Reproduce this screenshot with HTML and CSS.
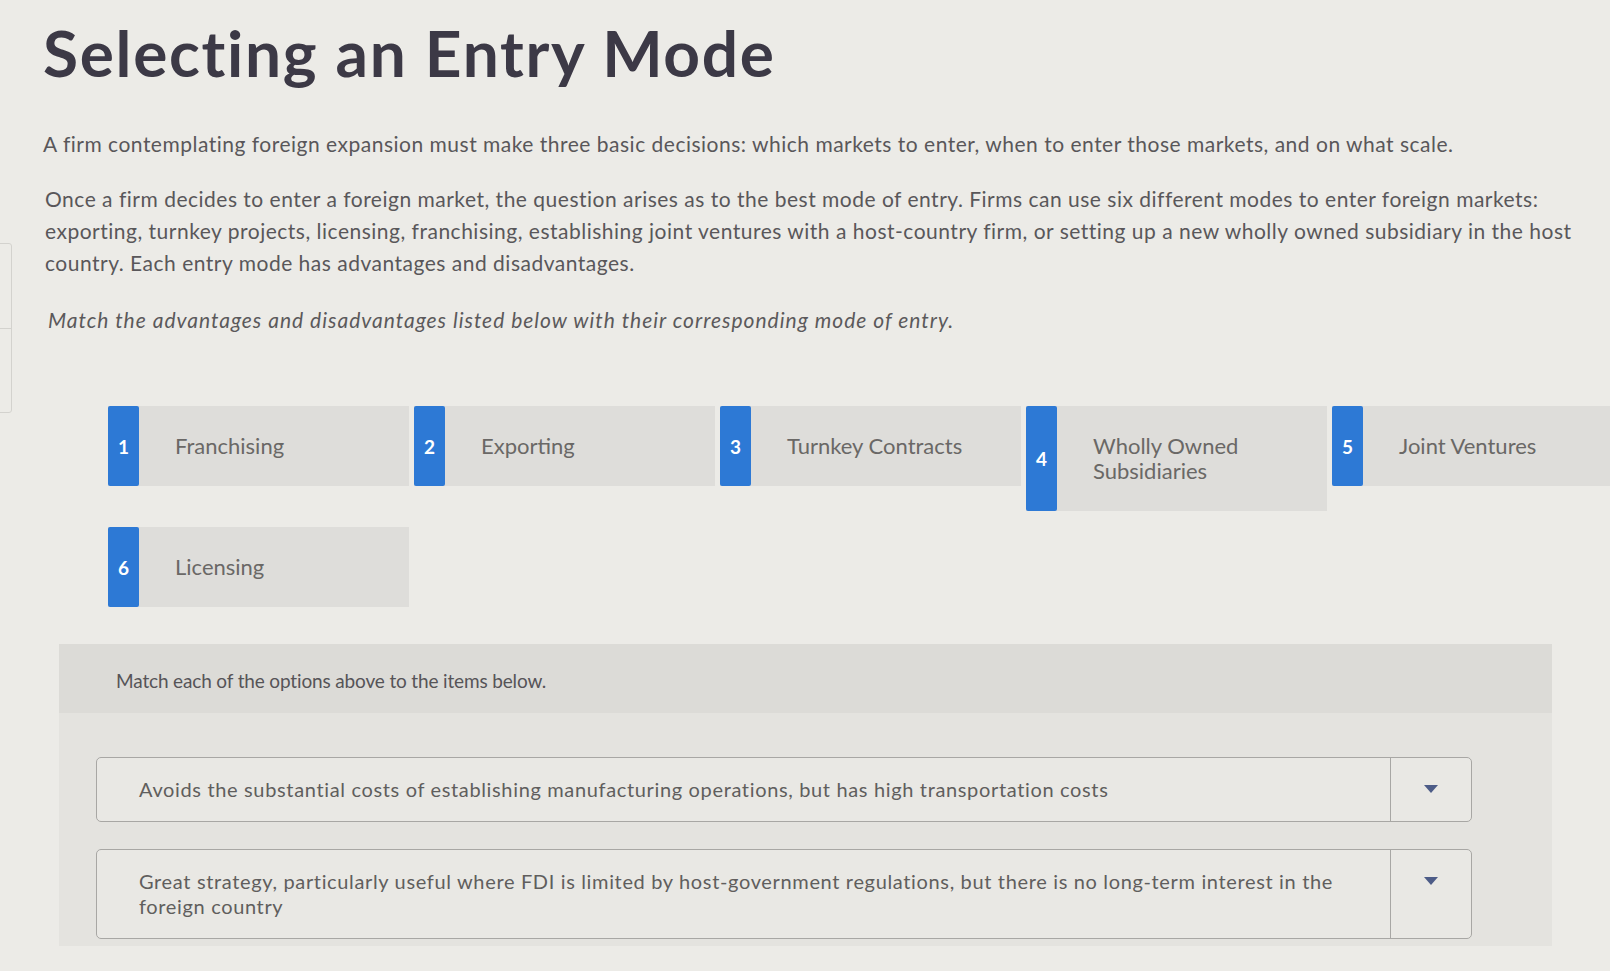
FILE: index.html
```html
<!DOCTYPE html>
<html lang="en">
<head>
<meta charset="utf-8">
<title>Selecting an Entry Mode</title>
<link rel="stylesheet" href="styles.css">
</head>
<body>
<div class="side-edge"><div class="side-edge-cell"></div><div class="side-edge-cell"></div></div>
<main class="page">
  <h1 class="title">Selecting an Entry Mode</h1>
  <p class="intro intro-first">A firm contemplating foreign expansion must make three basic decisions: which markets to enter, when to enter those markets, and on what scale.</p>
  <p class="intro intro-second">Once a firm decides to enter a foreign market, the question arises as to the best mode of entry. Firms can use six different modes to enter foreign markets: exporting, turnkey projects, licensing, franchising, establishing joint ventures with a host-country firm, or setting up a new wholly owned subsidiary in the host country. Each entry mode has advantages and disadvantages.</p>
  <p class="instruction">Match the advantages and disadvantages listed below with their corresponding mode of entry.</p>

  <div class="cards">
    <div class="card"><div class="card-num">1</div><div class="card-label">Franchising</div></div>
    <div class="card"><div class="card-num">2</div><div class="card-label">Exporting</div></div>
    <div class="card"><div class="card-num">3</div><div class="card-label">Turnkey Contracts</div></div>
    <div class="card"><div class="card-num">4</div><div class="card-label">Wholly Owned Subsidiaries</div></div>
    <div class="card"><div class="card-num">5</div><div class="card-label">Joint Ventures</div></div>
    <div class="card"><div class="card-num">6</div><div class="card-label">Licensing</div></div>
  </div>

  <section class="panel">
    <div class="panel-head">Match each of the options above to the items below.</div>
    <div class="panel-body">
      <div class="select">
        <div class="select-text">Avoids the substantial costs of establishing manufacturing operations, but has high transportation costs</div>
        <div class="select-btn"><svg class="caret" width="14" height="8" viewBox="0 0 14 8"><path d="M0 0 H14 L7 8 Z"/></svg></div>
      </div>
      <div class="select">
        <div class="select-text">Great strategy, particularly useful where FDI is limited by host-government regulations, but there is no long-term interest in the foreign country</div>
        <div class="select-btn"><svg class="caret" width="14" height="8" viewBox="0 0 14 8"><path d="M0 0 H14 L7 8 Z"/></svg></div>
      </div>
    </div>
  </section>
</main>
</body>
</html>
```

FILE: styles.css
```css
html, body {
  margin: 0;
  padding: 0;
}
body {
  background: #ecebe7;
  font-family: Lato, "Open Sans", "Liberation Sans", sans-serif;
  color: #585659;
  overflow: hidden;
  width: 1610px;
  height: 971px;
}
.side-edge {
  position: fixed;
  left: -12px;
  top: 243px;
  width: 22px;
  height: 168px;
  border: 1px solid #d3d2ce;
  border-radius: 3px;
  display: flex;
  flex-direction: column;
}
.side-edge-cell {
  flex: 1;
}
.side-edge-cell + .side-edge-cell {
  border-top: 1px solid #d3d2ce;
}
.page {
  padding-left: 43px;
}
.title {
  margin: 14px 0 0 0;
  font-size: 64px;
  line-height: 77px;
  font-weight: 700;
  color: #3c3946;
  letter-spacing: 1.7px;
}
.intro {
  margin: 0;
  font-size: 21px;
  line-height: 32px;
  color: #59575a;
  width: 1538px;
  letter-spacing: 0.5px;
}
.intro-first {
  margin-top: 37px;
}
.intro-second {
  margin-top: 23px;
  padding-left: 2px;
}
.instruction {
  margin: 25px 0 0 5px;
  font-size: 21px;
  line-height: 32px;
  font-style: italic;
  color: #5b595b;
  letter-spacing: 1px;
}
.cards {
  margin: 70px 0 0 65px;
  width: 1560px;
  display: flex;
  flex-wrap: wrap;
  align-items: flex-start;
  column-gap: 5px;
  row-gap: 16px;
}
.card {
  width: 301px;
  display: flex;
  background: #dedddA;
}
.card-num {
  width: 31px;
  flex: none;
  background: #2d79d5;
  color: #ffffff;
  font-weight: 700;
  font-size: 19px;
  display: flex;
  align-items: center;
  justify-content: center;
  border-radius: 2px;
}
.card-label {
  padding: 27px 24px 28px 36px;
  font-size: 22px;
  line-height: 25px;
  color: #6a6866;
}
.panel {
  margin: 37px 0 0 16px;
  width: 1493px;
  background: #e4e3df;
  padding-bottom: 7px;
}
.panel-head {
  height: 69px;
  background: #dcdbd7;
  padding-left: 57px;
  padding-top: 3px;
  box-sizing: border-box;
  display: flex;
  align-items: center;
  font-size: 19px;
  color: #565457;
  letter-spacing: -0.15px;
}
.panel-body {
  padding: 44px 0 0 37px;
  display: flex;
  flex-direction: column;
  gap: 27px;
}
.select {
  width: 1374px;
  display: flex;
  border: 1px solid #a8a7a4;
  border-radius: 5px;
  background: #e9e8e4;
}
.select-text {
  flex: 1;
  padding: 19px 30px 19px 42px;
  font-size: 20px;
  line-height: 25px;
  color: #605e5d;
  letter-spacing: 0.65px;
}
.select-btn {
  width: 80px;
  flex: none;
  border-left: 1px solid #a8a7a4;
  display: flex;
  justify-content: center;
  padding-top: 27px;
}
.caret {
  fill: #4d5c87;
}
```
